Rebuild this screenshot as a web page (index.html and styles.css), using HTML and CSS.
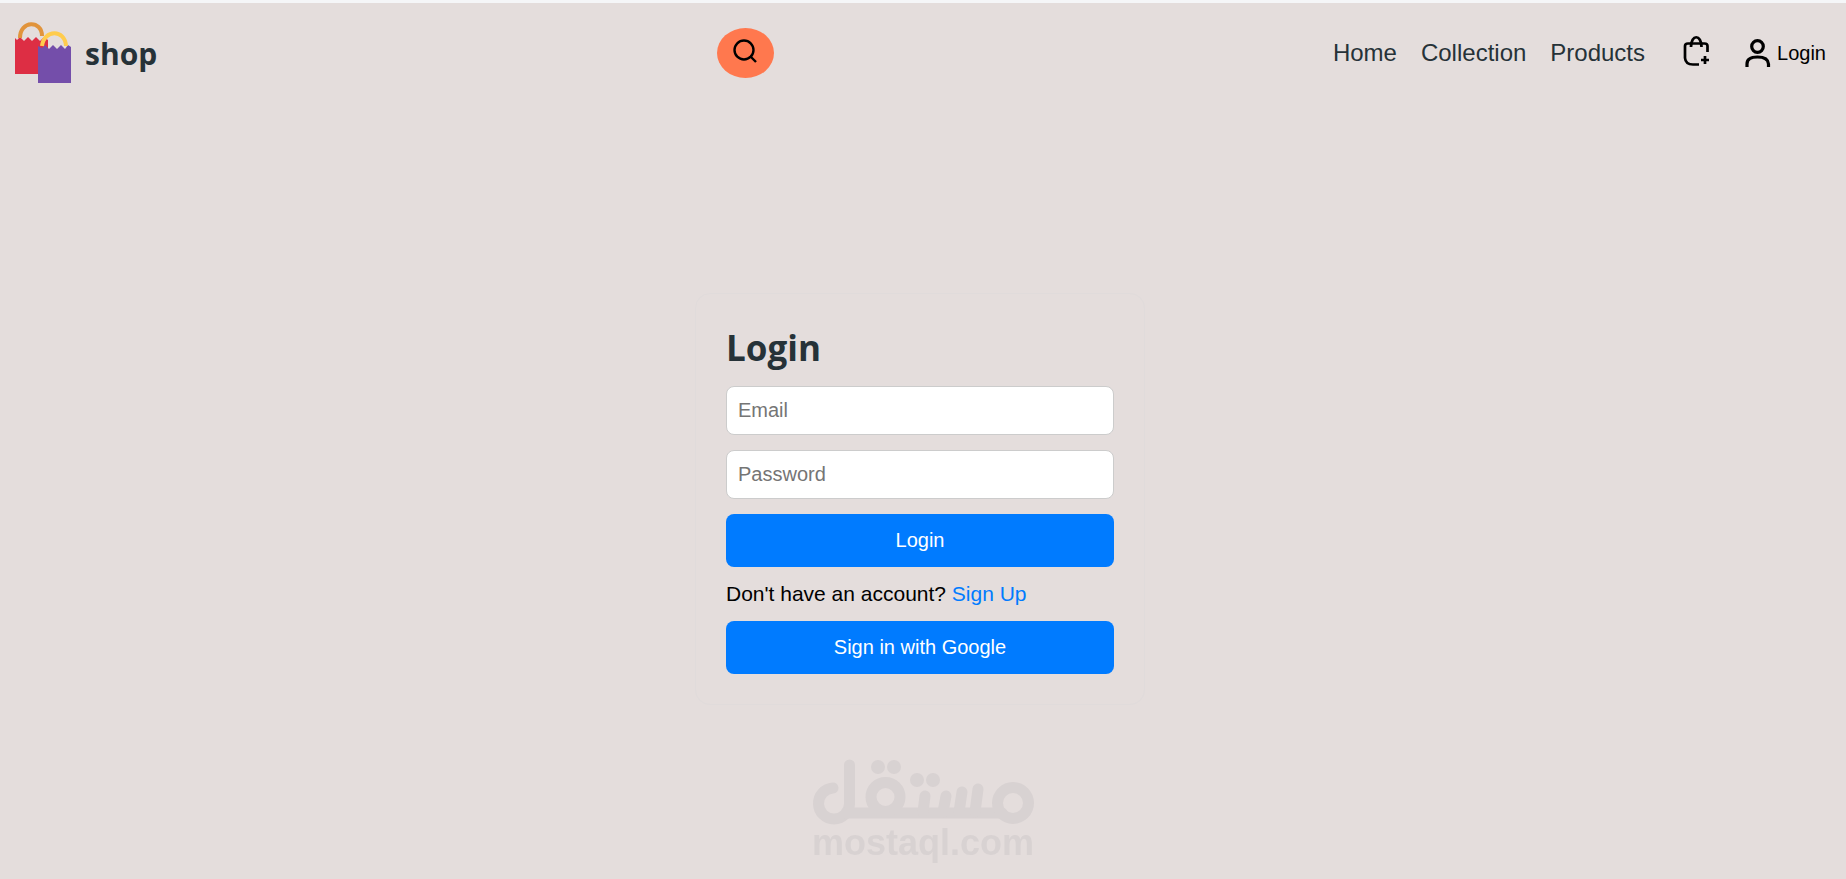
FILE: index.html
```html
<!DOCTYPE html>
<html lang="en">
<head>
    <meta charset="UTF-8">
    <meta name="viewport" content="width=device-width, initial-scale=1.0">
    <title>Shop - Login</title>
    <link rel="stylesheet" href="styles.css">
</head>
<body>
    <header class="header">
        <a href="#" class="logo">
            <svg class="logo-icon" viewBox="0 0 58 60" aria-hidden="true">
                <path d="M1 15l2 2 3-3 4 4 4-4 4 4 4-4 4 4 4-4 4 3v34H1z" fill="#dd2e44"/>
                <path d="M6 15C6 -3 28 -3 28 13" fill="none" stroke="#e1943c" stroke-width="4"/>
                <path d="M24 23l4 2 3-3 4 4 4-4 4 4 4-4 4 4 3-4 3 2v36H24z" fill="#744eaa"/>
                <path d="M28 23C30 6 51 6 52 23" fill="none" stroke="#ffcc4d" stroke-width="4"/>
            </svg>
            <span>shop</span>
        </a>

        <button class="search-button" aria-label="Search">
            <svg viewBox="0 0 24 24" width="24" height="24" aria-hidden="true">
                <circle cx="11" cy="11" r="9.500" fill="none" stroke="#000" stroke-width="2.400"/>
                <path d="M17 17l6 6" stroke="#000" stroke-width="2.400"/>
            </svg>
        </button>

        <nav class="nav">
            <a href="#">Home</a>
            <a href="#">Collection</a>
            <a href="#">Products</a>
            <a href="#" class="cart" aria-label="Cart">
                <svg viewBox="0 0 28 32" width="28" height="32" fill="none" stroke="#000" stroke-width="2.700" aria-hidden="true">
                    <path d="M16 29.500H10Q2.500 29.500 2 23V11Q2 8.500 5 8.500H21.500Q24.500 8.500 24.500 11V17"/>
                    <path d="M8 12C8 -1 18.500 -1 18.500 12"/>
                    <path d="M22 21v8M18 25h8"/>
                </svg>
            </a>
            <a href="#" class="user">
                <svg viewBox="0 0 26 28" width="26" height="28" fill="none" stroke="#000" stroke-width="3.200" aria-hidden="true">
                    <circle cx="12.500" cy="7.500" r="5.800"/>
                    <path d="M2 28V25Q2 18 12.500 18T23.500 25V28"/>
                </svg>
                <span>Login</span>
            </a>
        </nav>
    </header>

    <main class="main">
        <form class="login-form">
            <h1>Login</h1>
            <input type="email" placeholder="Email" aria-label="Email">
            <input type="password" placeholder="Password" aria-label="Password">
            <button type="submit">Login</button>
            <p>Don't have an account? <a href="#">Sign Up</a></p>
            <button type="button">Sign in with Google</button>
        </form>
    </main>

    <!-- Site mark at the bottom -->
    <div class="watermark">
        <svg viewBox="0 0 222 65" role="img" aria-label="مستقل">
            <g fill="none" stroke="#d8d2d2" stroke-width="11" stroke-linecap="round">
                <path d="M21 28A15.500 15.500 0 1 0 37.500 44V5"/>
                <path d="M34 53H190"/>
                <circle cx="73.500" cy="37" r="14.500"/>
                <circle cx="201" cy="43" r="15.500"/>
                <path d="M113 36l-2 16M134 36l-3 16M150 32l-3 20M166 29l-3 23"/>
            </g>
            <g fill="#d8d2d2">
                <circle cx="66" cy="7" r="7"/>
                <circle cx="82" cy="7" r="7"/>
                <circle cx="105" cy="20" r="7"/>
                <circle cx="121" cy="20" r="7"/>
            </g>
        </svg>
        <span>mostaql.com</span>
    </div>
</body>
</html>
```
FILE: styles.css
```css
* {
    box-sizing: border-box;
}

body {
    font-family: "Liberation Sans", Arial, sans-serif;
    font-size: 20px;
    margin: 0;
    min-height: 100vh;
    background-color: #e4dddc;
    border-top: 3px solid #f5f6f8;
}

a {
    text-decoration: none;
}

/* Header */
.header {
    display: flex;
    align-items: center;
    justify-content: space-between;
    height: 100px;
    padding: 0 20px 0 14px;
}

.logo {
    display: flex;
    align-items: center;
    gap: 13px;
    color: #263238;
    font-family: "Open Sans", sans-serif;
    font-size: 30px;
    font-weight: 700;
}

.logo-icon {
    width: 58px;
    height: 60px;
    overflow: visible;
}

.search-button {
    width: 57px;
    height: 50px;
    padding: 0 0 4px;
    border: none;
    border-radius: 50%;
    background-color: #ff784e;
    cursor: pointer;
}

.search-button svg {
    display: block;
    margin: 0 auto;
}

.nav {
    display: flex;
    align-items: center;
    gap: 24px;
    font-size: 24px;
}

.nav a {
    color: #263238;
}

.nav .cart {
    display: flex;
    margin: 0 10px 4px 14px;
}

.nav .user {
    display: flex;
    align-items: center;
    gap: 6px;
    color: #000;
    font-size: 20px;
}

/* Login form */
.main {
    display: flex;
    justify-content: center;
    padding: 190px 6px 0 0;
}

.login-form {
    display: flex;
    flex-direction: column;
    gap: 15px;
    width: 450px;
    padding: 30px;
    border: 1px solid #e0dbdb;
    border-radius: 15px;
}

.login-form h1 {
    margin: 0;
    color: #263238;
    font-family: "Open Sans", sans-serif;
    font-size: 35px;
    line-height: 47px;
}

.login-form input {
    height: 49px;
    padding: 0 11px;
    border: 1px solid #ccc;
    border-radius: 8px;
    font-family: inherit;
    font-size: 20px;
}

.login-form button {
    height: 53px;
    border: none;
    border-radius: 8px;
    background-color: #007bff;
    color: white;
    font-family: inherit;
    font-size: 20px;
    cursor: pointer;
}

.login-form p {
    margin: 0;
    font-size: 21px;
    line-height: 24px;
}

.login-form p a {
    color: #007bff;
}

/* Watermark lies over the page */
.watermark {
    position: fixed;
    bottom: 18px;
    left: 0;
    right: 0;
    display: flex;
    flex-direction: column;
    align-items: center;
    color: #d8d2d2;
    font-size: 36px;
    font-weight: 700;
    line-height: 36px;
    pointer-events: none;
}

.watermark svg {
    width: 222px;
    height: 65px;
    overflow: visible;
}
```
